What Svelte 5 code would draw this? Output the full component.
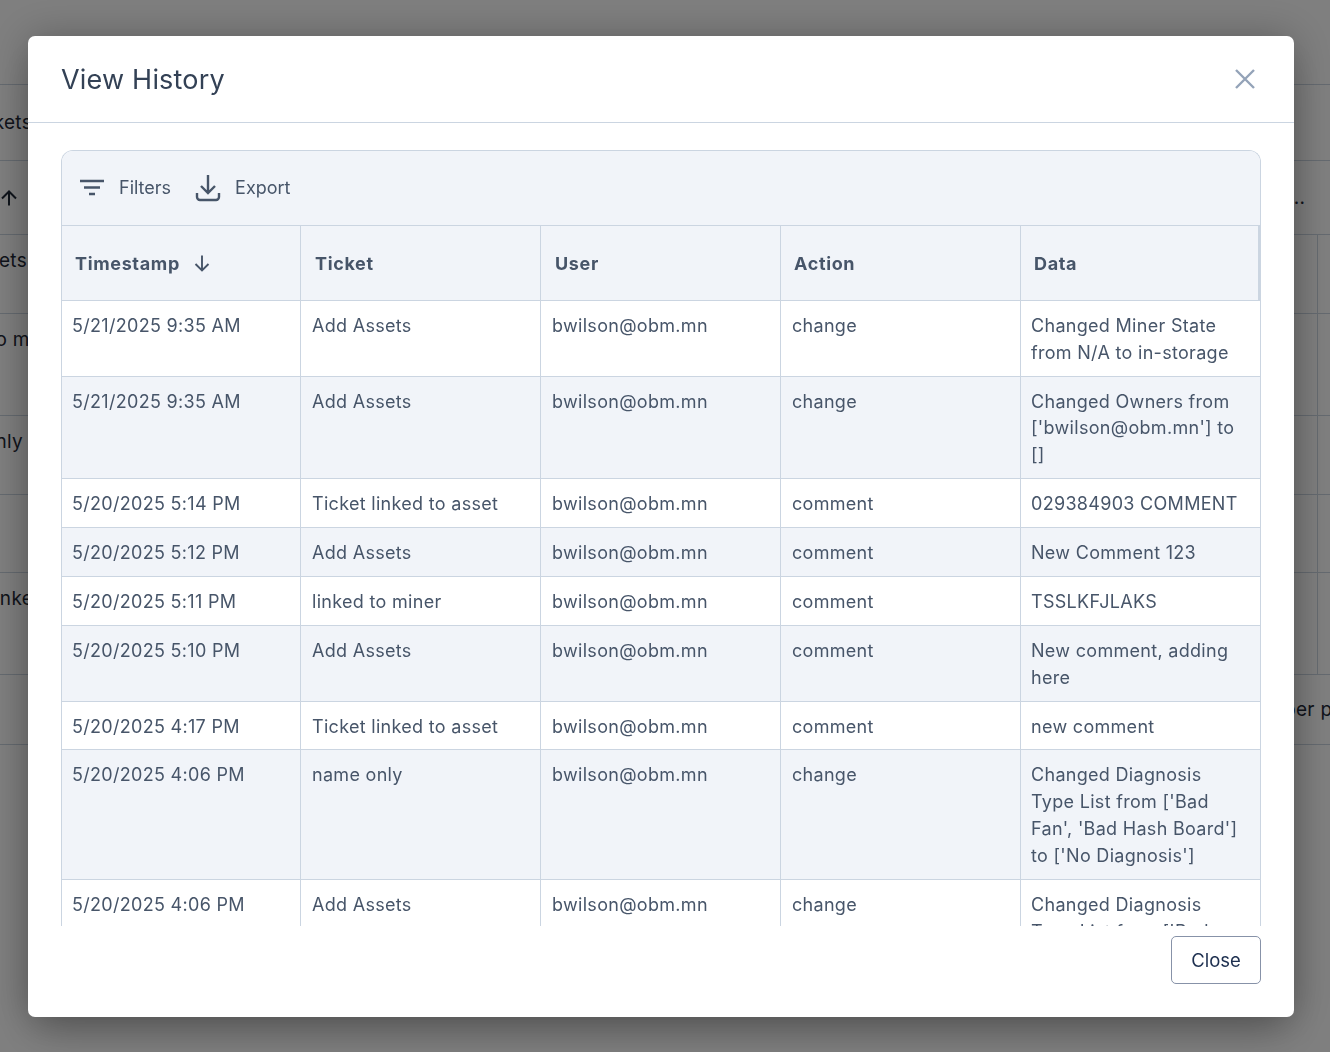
<script lang="ts">
  const rows = [
    { time: "5/21/2025 9:35 AM", ticket: "Add Assets", action: "change", data: "Changed Miner State from N/A to in-storage" },
    { time: "5/21/2025 9:35 AM", ticket: "Add Assets", action: "change", data: "Changed Owners from ['bwilson@obm.mn'] to []" },
    { time: "5/20/2025 5:14 PM", ticket: "Ticket linked to asset", action: "comment", data: "029384903 COMMENT" },
    { time: "5/20/2025 5:12 PM", ticket: "Add Assets", action: "comment", data: "New Comment 123" },
    { time: "5/20/2025 5:11 PM", ticket: "linked to miner", action: "comment", data: "TSSLKFJLAKS" },
    { time: "5/20/2025 5:10 PM", ticket: "Add Assets", action: "comment", data: "New comment, adding here" },
    { time: "5/20/2025 4:17 PM", ticket: "Ticket linked to asset", action: "comment", data: "new comment" },
    { time: "5/20/2025 4:06 PM", ticket: "name only", action: "change", data: "Changed Diagnosis Type List from ['Bad Fan', 'Bad Hash Board'] to ['No Diagnosis']" },
    { time: "5/20/2025 4:06 PM", ticket: "Add Assets", action: "change", data: "Changed Diagnosis Type List from ['Bad Fan', 'Bad Hash Board'] to ['No Diagnosis']" }
  ];

  // the page behind the dialog, only its edges show
  const backRows = [
    { h: 76, left: "Tickets", lw: 32, right: "", mid: true },
    { h: 74, left: "", lw: 28, right: "...", mid: true, arrow: true, tail: true },
    { h: 79, left: "Assets", lw: 27, right: "", tail: true },
    { h: 102, left: "to miner", lw: 65, right: "", tail: true },
    { h: 79, left: "name only", lw: 23, right: "", tail: true },
    { h: 78, left: "", lw: 28, right: "", tail: true },
    { h: 102, left: "linked", lw: 45, right: "", tail: true },
    { h: 71, left: "", lw: 28, right: "per pool", mid: true }
  ];
</script>

<div class="page">
  <div class="back">
    {#each backRows as r}
      <div class="back-row" class:mid={r.mid} style="height: {r.h}px">
        <div class="back-left" style="width: {r.lw}px">
          {#if r.arrow}
            <svg width="18" height="18" viewBox="0 0 18 18" fill="none" stroke="#1f2937" stroke-width="2"><path d="M9 16.500V2.500M2 9.500l7-7 7 7" /></svg>
          {:else}
            {r.left}
          {/if}
        </div>
        <div class="back-right">
          <span class="back-text">{r.right}</span>
          {#if r.tail}<span class="back-tail"></span>{/if}
        </div>
      </div>
    {/each}
  </div>
  <div class="overlay"></div>

  <div class="modal">
    <header class="modal-head">
      <h2>View History</h2>
      <button class="x" aria-label="Close dialog">
        <svg width="22" height="22" viewBox="0 0 22 22" fill="none" stroke="#94a3b8" stroke-width="2.4"><path d="M2 2l18 18M20 2L2 20" /></svg>
      </button>
    </header>

    <div class="modal-body">
      <div class="grid-wrap">
        <div class="toolbar">
          <button class="tool">
            <svg width="26" height="20" viewBox="0 0 26 20" fill="none" stroke="#475569" stroke-width="2.6"><path d="M1 3h24M5 9.500h16M10 16h6" /></svg>
            <span>Filters</span>
          </button>
          <button class="tool">
            <svg width="26" height="28" viewBox="0 0 26 28" fill="none" stroke="#475569" stroke-width="2.4"><path d="M13 1v18M6 12l7 7 7-7" /><path d="M2 19v4a3 3 0 0 0 3 3h16a3 3 0 0 0 3-3v-4" /></svg>
            <span>Export</span>
          </button>
        </div>

        <div class="row head">
          <div class="cell">Timestamp
            <svg class="sort" width="18" height="18" viewBox="0 0 18 18" fill="none" stroke="#475569" stroke-width="1.9"><path d="M9 1.500v15M2.500 10l6.500 6.500 6.500-6.500" /></svg>
          </div>
          <div class="cell">Ticket</div>
          <div class="cell">User</div>
          <div class="cell">Action</div>
          <div class="cell last">Data</div>
        </div>

        {#each rows as row, i}
          <div class="row" class:alt={i % 2 === 1}>
            <div class="cell">{row.time}</div>
            <div class="cell">{row.ticket}</div>
            <div class="cell">bwilson@obm.mn</div>
            <div class="cell">{row.action}</div>
            <div class="cell last">{row.data}</div>
          </div>
        {/each}
      </div>
    </div>

    <footer class="modal-foot">
      <button class="close">Close</button>
    </footer>
  </div>
</div>

<style>
  :global(body) {
    margin: 0;
    font-family: Inter, "Noto Sans", sans-serif;
    background: #fff;
  }

  .page {
    height: 1052px;
    overflow: hidden;
  }

  .back {
    padding-top: 84px;
    font-size: 19px;
    letter-spacing: 0.3px;
    color: #1f2937;
  }

  .back-row {
    display: flex;
    justify-content: space-between;
    align-items: flex-start;
    box-sizing: border-box;
    border-top: 1px solid #cbd5e1;
    padding-top: 14px;
  }

  .back-row:last-child {
    border-bottom: 1px solid #cbd5e1;
  }

  .back-row.mid {
    align-items: center;
    padding-top: 0;
  }

  .back-left {
    display: flex;
    justify-content: flex-end;
    white-space: nowrap;
  }

  .back-row:nth-child(2) .back-left {
    justify-content: flex-start;
  }

  .back-right {
    display: flex;
    align-self: stretch;
    width: 40px;
    margin-top: -14px;
    white-space: nowrap;
  }

  .back-row.mid .back-right {
    margin-top: 0;
    align-items: center;
  }

  .back-text {
    flex: 1;
    margin-left: -6px;
    line-height: 1;
  }

  .back-row:nth-child(2) .back-text {
    margin-left: -2px;
  }

  .back-tail {
    width: 12px;
    border-left: 1px solid #cbd5e1;
  }

  .overlay {
    position: fixed;
    inset: 0;
    background: rgba(0, 0, 0, 0.5);
  }

  .modal {
    position: fixed;
    top: 36px;
    left: 28px;
    width: 1266px;
    height: 981px;
    display: flex;
    flex-direction: column;
    background: #fff;
    border-radius: 7px;
    box-shadow: 0 20px 40px -8px rgba(0, 0, 0, 0.25), 0 0 40px rgba(0, 0, 0, 0.25);
    color: #475569;
  }

  .modal-head {
    display: flex;
    justify-content: space-between;
    align-items: center;
    height: 87px;
    box-sizing: border-box;
    padding: 0 38px 0 33px;
    border-bottom: 1px solid #cbd5e1;
  }

  h2 {
    margin: 0;
    font-size: 27px;
    font-weight: 400;
    letter-spacing: 0.2px;
    color: #334155;
  }

  .x,
  .tool,
  .close {
    font: inherit;
    background: none;
    cursor: pointer;
  }

  .x {
    display: flex;
    border: 0;
    padding: 0;
  }

  .modal-body {
    flex: 1;
    min-height: 0;
    padding: 27px 33px 0;
  }

  .grid-wrap {
    height: 100%;
    overflow: hidden;
    box-sizing: border-box;
    border: 1px solid #cbd5e1;
    border-bottom: 0;
    border-radius: 12px 12px 0 0;
    font-size: 18px;
    line-height: 26.8px;
    letter-spacing: 0.3px;
  }

  .toolbar {
    display: flex;
    align-items: center;
    gap: 24px;
    height: 74px;
    padding-left: 17px;
    background: #f1f4f9;
    border-bottom: 1px solid #cbd5e1;
  }

  .tool {
    display: flex;
    align-items: center;
    gap: 14px;
    border: 0;
    padding: 0;
    color: #475569;
    font-size: 18px;
    letter-spacing: 0;
  }

  .tool span {
    padding-top: 1px;
  }

  .row {
    display: grid;
    grid-template-columns: 239px repeat(3, 240px) 1fr;
    border-bottom: 1px solid #cbd5e1;
  }

  .row.alt,
  .row.head {
    background: #f1f4f9;
  }

  .row.head {
    height: 74px;
    font-weight: 700;
    letter-spacing: 0.65px;
  }

  .row.head .cell {
    display: flex;
    align-items: center;
    gap: 13px;
    padding: 2px 14px 0;
  }

  .row.head .cell:first-child {
    padding-left: 13px;
  }

  .row.head .cell:nth-child(n + 4) {
    padding-left: 13px;
  }

  .row.head .cell.last {
    border-right: 2px solid #cbd5e1;
  }

  .sort {
    flex: none;
    margin-top: -2px;
  }

  .cell {
    box-sizing: border-box;
    padding: 12px 14px 9.1px 10px;
    border-right: 1px solid #cbd5e1;
  }

  .cell:not(:first-child) {
    padding-left: 11px;
  }

  .cell.last {
    padding-left: 10px;
    border-right: 0;
  }

  .modal-foot {
    display: flex;
    justify-content: flex-end;
    height: 91px;
    box-sizing: border-box;
    padding: 10px 33px 33px;
  }

  .close {
    width: 90px;
    height: 48px;
    border: 1px solid #8792a8;
    border-radius: 5px;
    color: #1e3050;
    font-size: 18.5px;
  }
</style>
